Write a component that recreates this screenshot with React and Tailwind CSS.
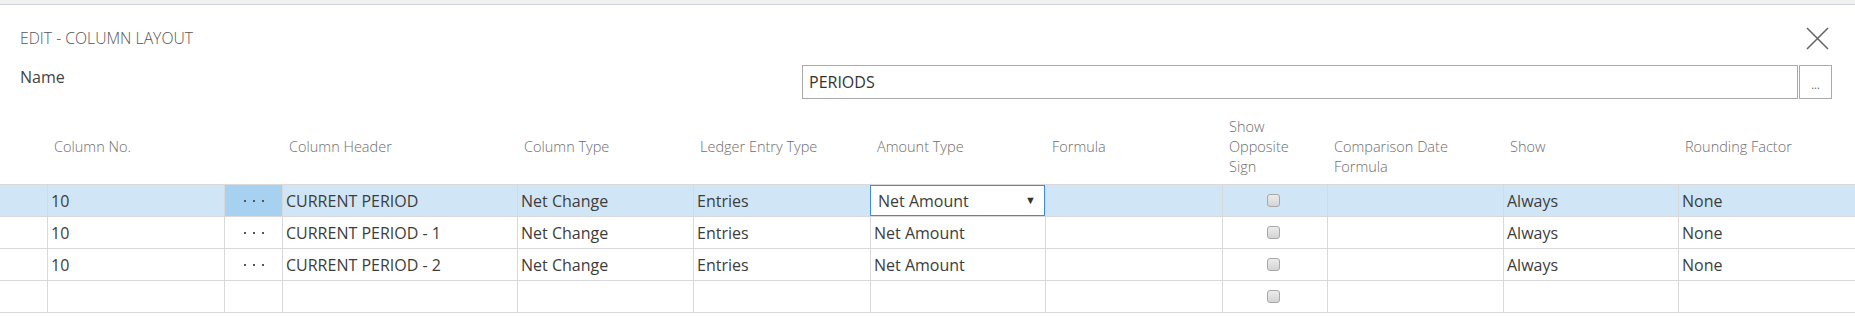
const cols = [
  { w: 'w-[47px]' },
  { w: 'w-[177px]', h: ['Column No.'] },
  { w: 'w-[58px]' },
  { w: 'w-[235px]', h: ['Column Header'] },
  { w: 'w-[176px]', h: ['Column Type'] },
  { w: 'w-[177px]', h: ['Ledger Entry Type'] },
  { w: 'w-[175px]', h: ['Amount Type'] },
  { w: 'w-[177px]', h: ['Formula'] },
  { w: 'w-[105px]', h: ['Show', 'Opposite', 'Sign'], tall: true },
  { w: 'w-[176px]', h: ['Comparison Date', 'Formula'] },
  { w: 'w-[175px]', h: ['Show'] },
  { w: 'w-[177px]', h: ['Rounding Factor'] },
]

const rows = [
  ['10', 'CURRENT PERIOD', 'Net Change', 'Entries', 'Net Amount', '', '', 'Always', 'None'],
  ['10', 'CURRENT PERIOD - 1', 'Net Change', 'Entries', 'Net Amount', '', '', 'Always', 'None'],
  ['10', 'CURRENT PERIOD - 2', 'Net Change', 'Entries', 'Net Amount', '', '', 'Always', 'None'],
  ['', '', '', '', '', '', '', '', ''],
]

function Dots() {
  return (
    <div className="flex items-center gap-[7px]">
      <span className="w-[2px] h-[2px] bg-[#555]" />
      <span className="w-[2px] h-[2px] bg-[#555]" />
      <span className="w-[2px] h-[2px] bg-[#555]" />
    </div>
  )
}

function Checkbox() {
  return (
    <span className="block w-[13px] h-[13px] rounded-[3px] border border-[#a8a8a8] bg-gradient-to-b from-[#ececec] to-[#d4d4d4]" />
  )
}

function Row({ data, selected, empty }) {
  const [no, header, type, ledger, amount, formula, cmp, show, rounding] = data
  const cell = 'h-full border-l border-[#d9d9d9] flex items-center pl-[3px] shrink-0'
  return (
    <div className={`flex h-[32px] border-t border-[#d9d9d9] ${selected ? 'bg-[#d0e6f6]' : 'bg-white'}`}>
      <div className="w-[47px] h-full shrink-0" />
      <div className={`${cell} w-[177px]`}>{no}</div>
      <div className={`h-full border-l border-[#d9d9d9] flex items-center justify-center shrink-0 w-[58px] ${selected ? 'bg-[#a7d1f0]' : ''}`}>
        {!empty && <Dots />}
      </div>
      <div className={`${cell} w-[235px]`}>{header}</div>
      <div className={`${cell} w-[176px]`}>{type}</div>
      <div className={`${cell} w-[177px]`}>{ledger}</div>
      {selected ? (
        <div className="w-[175px] h-full shrink-0 border border-[#3c8de0] bg-white flex items-center justify-between pl-[7px] pr-[8px]">
          <span>{amount}</span>
          <span className="text-[11px] text-[#333]">▼</span>
        </div>
      ) : (
        <div className={`${cell} w-[175px]`}>{amount}</div>
      )}
      <div className={`${cell} w-[177px]`}>{formula}</div>
      <div className="h-full border-l border-[#d9d9d9] flex items-center justify-center pr-[3px] shrink-0 w-[105px]">
        <Checkbox />
      </div>
      <div className={`${cell} w-[176px]`}>{cmp}</div>
      <div className={`${cell} w-[175px]`}>{show}</div>
      <div className={`${cell} w-[177px]`}>{rounding}</div>
    </div>
  )
}

export default function App() {
  return (
    <div className="w-[1855px] h-[328px] bg-white overflow-hidden font-['Open_Sans',sans-serif] text-[16px] text-[#3d3d3d]">
      <div className="h-[5px] bg-[#f1f1f1] border-b border-[#cbd3de]" />

      <div className="flex items-start justify-between pl-[20px] pr-[26px] pt-[22px]">
        <h1 className="mt-[1px] leading-[20px] font-light text-[15.75px] text-[#555]">EDIT - COLUMN LAYOUT</h1>
        <svg width="23" height="23" viewBox="0 0 23 23" className="text-[#666]">
          <path d="M1 1 L22 22 M22 1 L1 22" stroke="currentColor" strokeWidth="1.6" fill="none" />
        </svg>
      </div>

      <div className="flex items-start pl-[20px] pr-[23px] mt-[15px]">
        <label className="flex-1 pt-[2px] leading-[20px] text-[#444]">Name</label>
        <div className="w-[996px] h-[34px] border border-[#a9a9a9] flex items-center pl-[6px] text-[#333]">PERIODS</div>
        <button className="ml-[1px] w-[33px] h-[34px] border border-[#a9a9a9] bg-white flex items-end justify-center pb-[8px] text-[11px] leading-none text-[#666]">...</button>
      </div>

      <div className="flex h-[85px] items-start font-light text-[14.5px] text-[#6e6e6e] leading-[20px]">
        {cols.map((c, i) => (
          <div key={i} className={`${c.w} shrink-0 pl-[7px] ${c.tall ? 'pt-[18px]' : 'pt-[38px]'}`}>
            {c.h && c.h.map((line, j) => <div key={j}>{line}</div>)}
          </div>
        ))}
      </div>

      <div className="border-b border-[#d9d9d9]">
        {rows.map((r, i) => (
          <Row key={i} data={r} selected={i === 0} empty={i === 3} />
        ))}
      </div>
    </div>
  )
}
